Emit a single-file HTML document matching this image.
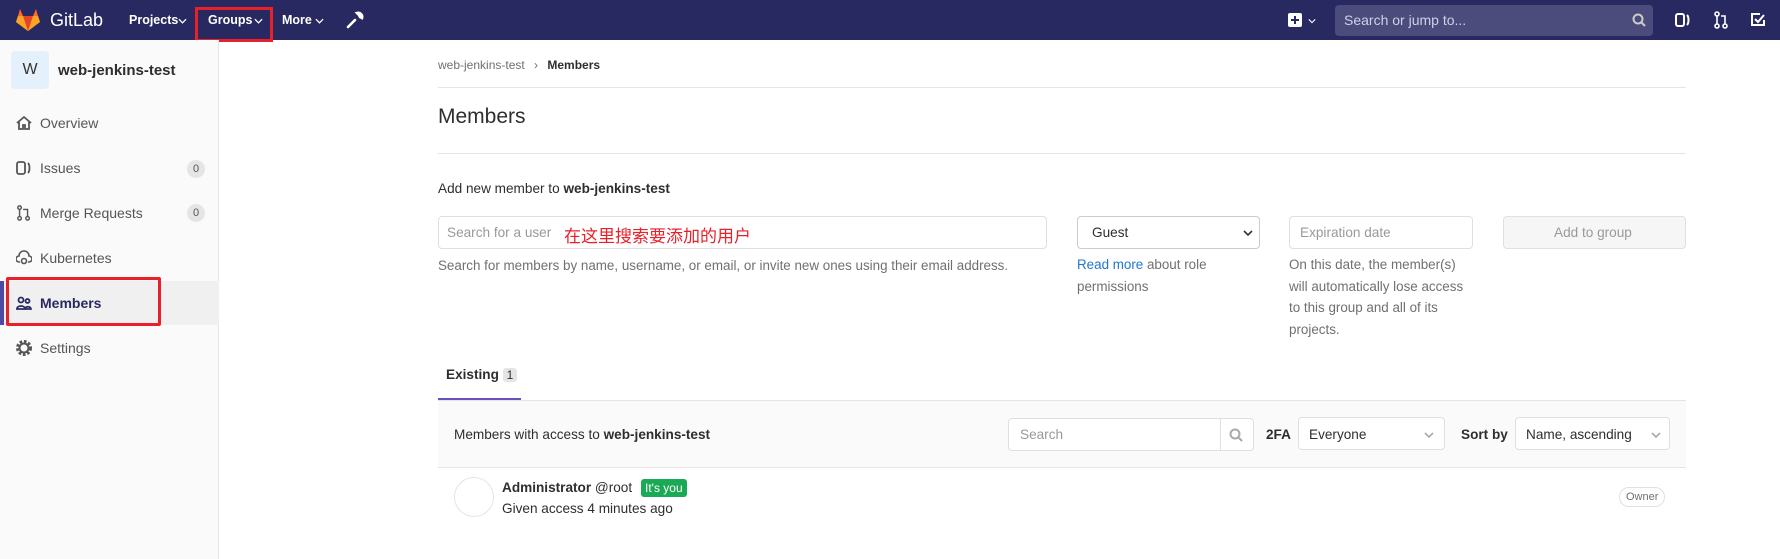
<!DOCTYPE html>
<html><head><meta charset="utf-8"><style>
*{box-sizing:border-box;margin:0;padding:0}
body{width:1780px;height:559px;overflow:hidden;background:#fff;font-family:"Liberation Sans","Noto Sans CJK SC",sans-serif;font-size:13.6px;color:#2e2e2e;position:relative}
.a{position:absolute;white-space:nowrap}
.nav{position:absolute;left:0;top:0;width:1780px;height:40px;background:#292961}
.nl{color:#fff;font-size:12.5px;font-weight:bold;top:13px}
.side{position:absolute;left:0;top:40px;width:219px;height:519px;background:#fafafa;border-right:1px solid #e5e5e5}
.si{left:40px;font-size:14px;color:#555}
.ic{left:16px;width:16px;height:16px}
.badge{background:#e5e5e5;border-radius:9px;width:18px;height:18px;font-size:11px;color:#555;text-align:center;line-height:18px;left:187px}
.inp{border:1px solid #dfdfdf;border-radius:4px;height:33px;background:#fff}
.ph{color:#999;font-size:13.6px}
.help{color:#707070;font-size:13.4px;line-height:21.5px}
.hr{position:absolute;left:438px;width:1248px;height:1px;background:#e5e5e5}
.chev{position:absolute;width:10px;height:6px}
</style></head><body>
<div class="nav"></div>
<svg class="a" style="left:15px;top:8px" width="26" height="24" viewBox="0 0 26 24"><path d="M13 23L1 14 3 8 5 1 8 8h10l3-7 2 7 2 6z" fill="#fc6d26"/><path d="M13 23L8 8h10z" fill="#e24329"/><path d="M13 23L1 14 3 8 8 8z" fill="#fca326"/><path d="M13 23l12-9-2-6-5 0z" fill="#fca326"/></svg>
<div class="a" style="left:50px;top:10px;color:#fff;font-size:18px">GitLab</div>
<div class="a nl" style="left:129px">Projects</div>
<svg class="chev" style="left:178px;top:18px;width:9px" viewBox="0 0 10 6"><path d="M1 1l4 4 4-4" stroke="#fff" stroke-width="1.4" fill="none"/></svg>
<div class="a nl" style="left:208px">Groups</div>
<svg class="chev" style="left:254px;top:18px;width:9px" viewBox="0 0 10 6"><path d="M1 1l4 4 4-4" stroke="#fff" stroke-width="1.4" fill="none"/></svg>
<div class="a" style="left:195px;top:7px;width:78px;height:35px;border:3px solid #e8202a"></div>
<div class="a nl" style="left:282px">More</div>
<svg class="chev" style="left:315px;top:18px;width:9px" viewBox="0 0 10 6"><path d="M1 1l4 4 4-4" stroke="#fff" stroke-width="1.4" fill="none"/></svg>
<svg class="a" style="left:346px;top:11px" width="18" height="18" viewBox="0 0 18 18"><path d="M2 16l7-7M11 2a4 4 0 015 5l-2-1-1-2z" stroke="#fff" stroke-width="2.6" fill="none" stroke-linecap="round"/></svg>
<div class="a" style="left:1288px;top:13px;width:14px;height:14px;background:#fff;border-radius:2px"></div>
<div class="a" style="left:1291px;top:19px;width:8px;height:2px;background:#292961"></div>
<div class="a" style="left:1294px;top:16px;width:2px;height:8px;background:#292961"></div>
<svg class="chev" style="left:1308px;top:18px;width:8px" viewBox="0 0 10 6"><path d="M1 1l4 4 4-4" stroke="#fff" stroke-width="1.4" fill="none"/></svg>
<div class="a" style="left:1335px;top:5px;width:318px;height:31px;background:#4b4b7c;border-radius:4px"></div>
<div class="a" style="left:1344px;top:12px;color:#d0d0e8;font-size:14px">Search or jump to...</div>
<svg class="a" style="left:1632px;top:13px" width="14" height="14"><circle cx="6" cy="6" r="4.5" stroke="#ccc" stroke-width="2" fill="none"/><path d="M9 9l4 4" stroke="#ccc" stroke-width="2"/></svg>
<svg class="a" style="left:1675px;top:12px" width="16" height="16" fill="none" stroke="#fff" stroke-width="2"><rect x="1" y="2" width="8" height="12" rx="2"/><path d="M12 3c2 2 2 8 0 10"/></svg>
<svg class="a" style="left:1714px;top:11px" width="14" height="18" fill="none" stroke="#fff" stroke-width="1.6"><circle cx="3" cy="3" r="2"/><circle cx="3" cy="15" r="2"/><circle cx="11" cy="15" r="2"/><path d="M3 5v8M11 13V5H7"/></svg>
<svg class="a" style="left:1750px;top:12px" width="16" height="16" fill="none" stroke="#fff" stroke-width="2"><path d="M14 8v5H2V2h8"/><path d="M5 7l3 3 6-7"/></svg>

<div class="side"></div>
<div class="a" style="left:11px;top:51px;width:38px;height:38px;background:#e4f0fb;border-radius:4px;text-align:center;line-height:38px;font-size:16px;color:#333">W</div>
<div class="a" style="left:58px;top:62px;font-size:15px;font-weight:bold;color:#2e2e2e">web-jenkins-test</div>
<div class="a" style="left:0;top:281px;width:219px;height:44px;background:#f0f0f0"></div>
<div class="a" style="left:0;top:281px;width:4px;height:44px;background:#4b4ba3"></div>
<div class="a" style="left:6px;top:277px;width:155px;height:49px;border:3px solid #e8202a;border-radius:2px"></div>
<svg class="a ic" style="top:115px" viewBox="0 0 16 16" fill="none" stroke="#555" stroke-width="1.8"><path d="M1 8l7-6 7 6M3 7v7h4v-4h2v4h4V7"/></svg>
<div class="a si" style="top:115px">Overview</div>
<svg class="a ic" style="top:160px" viewBox="0 0 16 16" fill="none" stroke="#555" stroke-width="1.8"><rect x="1" y="2" width="8" height="12" rx="2"/><path d="M12 3c2 2 2 8 0 10"/></svg>
<div class="a si" style="top:160px">Issues</div><div class="a badge" style="top:160px">0</div>
<svg class="a ic" style="top:205px" viewBox="0 0 16 18" fill="none" stroke="#555" stroke-width="1.6"><circle cx="3" cy="3" r="2"/><circle cx="3" cy="15" r="2"/><circle cx="12" cy="15" r="2"/><path d="M3 5v8M12 13V5H7"/></svg>
<div class="a si" style="top:205px">Merge Requests</div><div class="a badge" style="top:204px">0</div>
<svg class="a ic" style="top:250px" viewBox="0 0 16 16" fill="none" stroke="#555" stroke-width="1.6"><path d="M4 12H3a3 3 0 010-6 5 5 0 0110 0 3 3 0 010 6h-1"/><circle cx="8" cy="11" r="2.5"/></svg>
<div class="a si" style="top:250px">Kubernetes</div>
<svg class="a ic" style="top:295px" viewBox="0 0 16 16" fill="none" stroke="#292961" stroke-width="1.8"><circle cx="5" cy="5" r="2.5"/><circle cx="11.5" cy="6" r="2"/><path d="M1 14c0-4 8-4 8 0zM9 14c0-3 6-3 6 0z"/></svg>
<div class="a si" style="top:295px;color:#292961;font-weight:bold">Members</div>
<svg class="a ic" style="top:340px" viewBox="0 0 16 16"><circle cx="8" cy="8" r="6" fill="none" stroke="#555" stroke-width="4" stroke-dasharray="2.4 1.6"/><circle cx="8" cy="8" r="4.5" fill="none" stroke="#555" stroke-width="2"/></svg>
<div class="a si" style="top:340px">Settings</div>

<div class="a" style="left:438px;top:58px;font-size:12px;color:#707070">web-jenkins-test <span style="margin:0 6px">›</span> <b style="color:#2e2e2e">Members</b></div>
<div class="hr" style="top:87px"></div>
<div class="a" style="left:438px;top:105px;font-size:21px;color:#2e2e2e">Members</div>
<div class="hr" style="top:153px"></div>
<div class="a" style="left:438px;top:181px">Add new member to <b>web-jenkins-test</b></div>
<div class="a inp" style="left:438px;top:216px;width:609px"></div>
<div class="a ph" style="left:447px;top:225px">Search for a user</div>
<div class="a" style="left:564px;top:222px;color:#e8202a;font-size:17px">在这里搜索要添加的用户</div>
<div class="a help" style="left:438px;top:255px">Search for members by name, username, or email, or invite new ones using their email address.</div>
<div class="a inp" style="left:1077px;top:216px;width:183px;border-color:#ccc"></div>
<div class="a" style="left:1092px;top:225px">Guest</div>
<svg class="chev" style="left:1243px;top:230px" viewBox="0 0 10 6"><path d="M1 1l4 4 4-4" stroke="#333" stroke-width="1.6" fill="none"/></svg>
<div class="a help" style="left:1077px;top:254px"><span style="color:#1f78d1">Read more</span> about role<br>permissions</div>
<div class="a inp" style="left:1289px;top:216px;width:184px"></div>
<div class="a ph" style="left:1300px;top:225px">Expiration date</div>
<div class="a help" style="left:1289px;top:254px">On this date, the member(s)<br>will automatically lose access<br>to this group and all of its<br>projects.</div>
<div class="a inp" style="left:1503px;top:216px;width:183px;background:#f6f6f6;border-color:#e0e0e0"></div>
<div class="a" style="left:1554px;top:225px;color:#999">Add to group</div>

<div class="a" style="left:446px;top:367px;font-weight:bold;font-size:13.6px">Existing <span style="display:inline-block;background:#e5e5e5;border-radius:3px;padding:0 4px;font-weight:normal;font-size:12px">1</span></div>
<div class="a" style="left:438px;top:398px;width:83px;height:2px;background:#6b4fbb"></div>
<div class="a" style="left:438px;top:400px;width:1248px;height:68px;background:#fafafa;border-top:1px solid #e5e5e5;border-bottom:1px solid #e5e5e5"></div>
<div class="a" style="left:454px;top:427px">Members with access to <b>web-jenkins-test</b></div>
<div class="a inp" style="left:1008px;top:418px;width:246px"></div>
<div class="a" style="left:1220px;top:418px;width:1px;height:33px;background:#e0e0e0"></div>
<div class="a ph" style="left:1020px;top:427px">Search</div>
<svg class="a" style="left:1229px;top:428px" width="14" height="14"><circle cx="6" cy="6" r="4.5" stroke="#aaa" stroke-width="2" fill="none"/><path d="M9 9l4 4" stroke="#aaa" stroke-width="2"/></svg>
<div class="a" style="left:1266px;top:427px;font-weight:bold">2FA</div>
<div class="a inp" style="left:1298px;top:417px;width:147px"></div>
<div class="a" style="left:1309px;top:427px">Everyone</div>
<svg class="chev" style="left:1424px;top:432px" viewBox="0 0 10 6"><path d="M1 1l4 4 4-4" stroke="#aaa" stroke-width="1.6" fill="none"/></svg>
<div class="a" style="left:1461px;top:427px;font-weight:bold">Sort by</div>
<div class="a inp" style="left:1515px;top:417px;width:155px"></div>
<div class="a" style="left:1526px;top:427px">Name, ascending</div>
<svg class="chev" style="left:1651px;top:432px" viewBox="0 0 10 6"><path d="M1 1l4 4 4-4" stroke="#aaa" stroke-width="1.6" fill="none"/></svg>

<div class="a" style="left:454px;top:477px;width:40px;height:40px;border:1px solid #e5e5e5;border-radius:50%"></div>
<div class="a" style="left:502px;top:480px"><b>Administrator</b> @root</div>
<div class="a" style="left:641px;top:479px;background:#1aaa55;color:#fff;font-size:12px;padding:2px 4px;border-radius:3px">It's you</div>
<div class="a" style="left:502px;top:501px;color:#2e2e2e">Given access 4 minutes ago</div>
<div class="a" style="left:1619px;top:487px;border:1px solid #e0e0e0;border-radius:11px;padding:3px 6px;font-size:11px;color:#707070">Owner</div>
</body></html>
